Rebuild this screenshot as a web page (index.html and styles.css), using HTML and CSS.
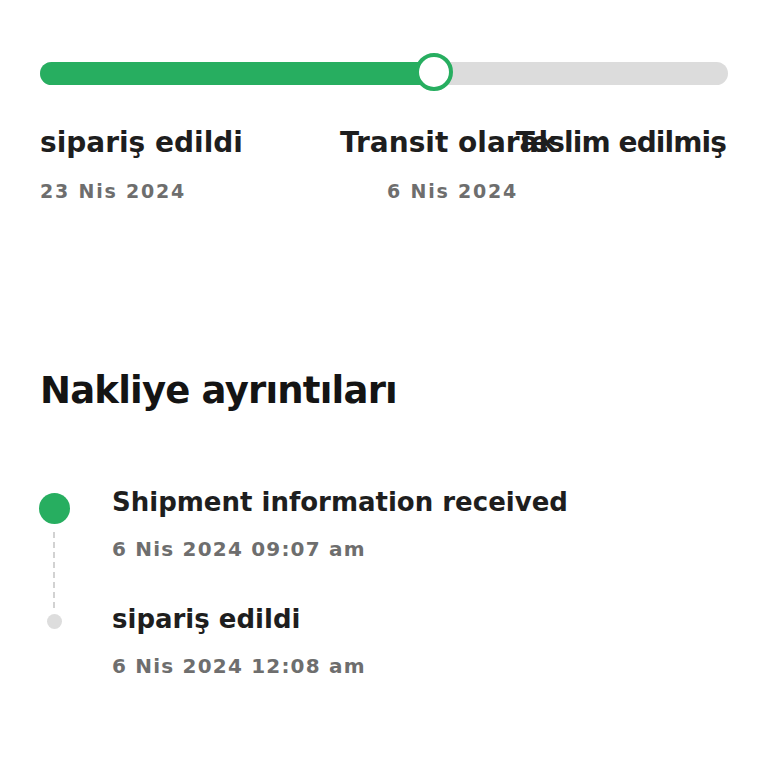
FILE: index.html
```html
<!DOCTYPE html>
<html lang="tr">
<head>
<meta charset="utf-8">
<link rel="stylesheet" href="styles.css">
</head>
<body>
<div class="page">
  <section class="status">
    <div class="bar">
      <div class="track">
        <div class="fill" style="width:57.3%"></div>
      </div>
      <div class="knob" style="left:57.3%"></div>
    </div>
    <div class="stops">
      <div class="stop stop-start">
        <div class="stop-title">sipariş edildi</div>
        <div class="stop-date">23 Nis 2024</div>
      </div>
      <div class="stop stop-mid">
        <div class="stop-title">Transit olarak</div>
        <div class="stop-date">6 Nis 2024</div>
      </div>
      <div class="stop stop-end">
        <div class="stop-title">Teslim edilmiş</div>
      </div>
    </div>
  </section>

  <h2 class="heading">Nakliye ayrıntıları</h2>

  <ul class="timeline">
    <li class="event event-active">
      <div class="marker"><span class="dot"></span><span class="line"></span></div>
      <div class="event-body">
        <div class="event-title">Shipment information received</div>
        <div class="event-date">6 Nis 2024 09:07 am</div>
      </div>
    </li>
    <li class="event">
      <div class="marker"><span class="dot"></span></div>
      <div class="event-body">
        <div class="event-title">sipariş edildi</div>
        <div class="event-date">6 Nis 2024 12:08 am</div>
      </div>
    </li>
  </ul>
</div>
</body>
</html>
```
FILE: styles.css
```css
html, body {
  margin: 0;
  padding: 0;
  background: #ffffff;
}
body {
  font-family: "DejaVu Sans", "Noto Sans", sans-serif;
  color: #1e1e1e;
}
.page {
  padding: 53px 40px 0 40px;
}
.bar {
  position: relative;
  height: 40px;
  display: flex;
  align-items: center;
}
.track {
  flex: 1;
  height: 23px;
  border-radius: 12px;
  background: #dcdcdc;
  overflow: hidden;
  display: flex;
}
.fill {
  height: 100%;
  background: #27ae60;
}
.knob {
  position: absolute;
  top: 0;
  width: 30px;
  height: 30px;
  margin-left: -19px;
  border: 4px solid #27ae60;
  border-radius: 50%;
  background: #ffffff;
}
.stops {
  display: grid;
  margin-top: 32px;
}
.stop {
  grid-area: 1 / 1;
}
.stop-start { justify-self: start; }
.stop-end {
  justify-self: end;
  text-align: right;
  margin-right: 2px;
}
.stop-end .stop-title { letter-spacing: -0.9px; }
.stop-mid {
  justify-self: start;
  margin-left: 300px;
  text-align: center;
}
.stop-mid .stop-date { padding-left: 8px; }
.stop-title {
  font-size: 28px;
  font-weight: 700;
  line-height: 36px;
  color: #1e1e1e;
  white-space: nowrap;
}
.stop-date {
  margin-top: 18px;
  font-size: 19px;
  font-weight: 700;
  line-height: 24px;
  letter-spacing: 1.8px;
  color: #6e6e6e;
  white-space: nowrap;
}
.heading {
  margin: 164px 0 0 0;
  font-size: 37px;
  font-weight: 700;
  line-height: 48px;
  letter-spacing: -0.8px;
  color: #141414;
}
.timeline {
  list-style: none;
  margin: 70px 0 0 0;
  padding: 0;
}
.event {
  display: flex;
  gap: 44px;
}
.marker {
  width: 28px;
  display: flex;
  flex-direction: column;
  align-items: center;
}
.dot {
  width: 15px;
  height: 15px;
  margin-top: 12px;
  border-radius: 50%;
  background: #dddddd;
}
.event-active .dot {
  width: 31px;
  height: 31px;
  margin-top: 8px;
  background: #27ae60;
}
.line {
  flex: 1;
  width: 0;
  margin: 8px 0 -6px 0;
  border-left: 2px dashed #d2d2d2;
}
.event-body {
  padding-bottom: 41px;
}
.event-title {
  font-size: 26px;
  font-weight: 700;
  line-height: 34px;
  color: #1e1e1e;
  white-space: nowrap;
}
.event-date {
  margin-top: 18px;
  font-size: 20px;
  font-weight: 700;
  line-height: 24px;
  letter-spacing: 1.2px;
  color: #6e6e6e;
  white-space: nowrap;
}
```
